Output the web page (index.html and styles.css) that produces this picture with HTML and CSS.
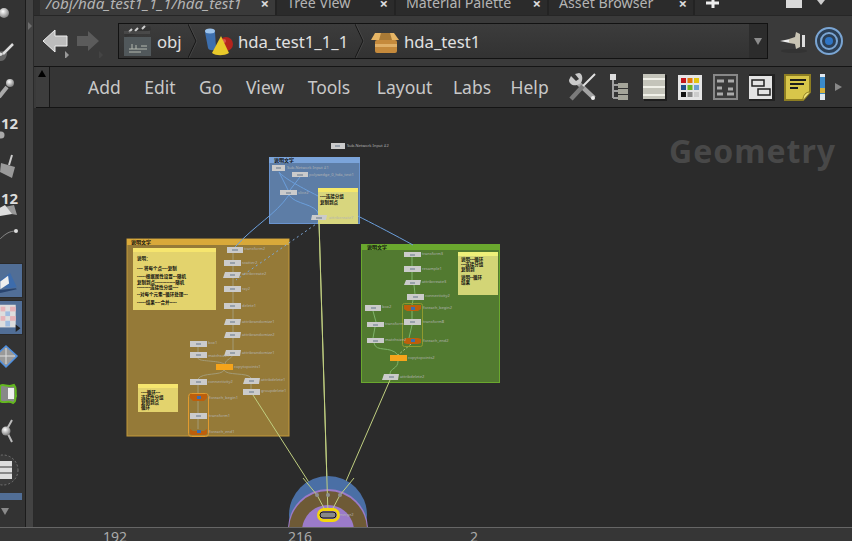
FILE: index.html
```html
<!DOCTYPE html>
<html lang="en">
<head>
<meta charset="utf-8">
<title>Network editor</title>
<link rel="stylesheet" href="styles.css">
</head>
<body>
<div class="app">
  <div class="workspace">
    <aside class="rail">
      <svg class="tool t1" viewBox="0 0 25 32"><defs><radialGradient id="ball" cx=".4" cy=".35" r=".7"><stop offset="0" stop-color="#fff"/><stop offset="1" stop-color="#777"/></radialGradient></defs><circle cx="4" cy="13" r="5" fill="url(#ball)"/></svg>
      <svg class="tool t2" viewBox="0 32 25 36"><path d="M-2 52c3-1 7-1 9 1 0 3-2 8-6 8h-4z" fill="#666"/><path d="M13 44 3 54" stroke="#ddd" stroke-width="2.500" fill="none"/><path d="M-2 53c2-1 4 0 5 1-1 2-3 2-5 2z" fill="#ddd"/></svg>
      <svg class="tool t3" viewBox="0 68 25 36"><path d="M-1 97 7 87" stroke="#aaa" stroke-width="4"/><circle cx="10" cy="83" r="4" fill="url(#ball)"/></svg>
      <svg class="tool t4" viewBox="0 104 25 42"><text class="twelve" x="1" y="129">12</text><circle cx="1" cy="135" r="3.500" fill="#aaa"/></svg>
      <svg class="tool t5" viewBox="0 146 25 36"><path d="M9 165 12 155" stroke="#ccc" stroke-width="2"/><path d="M1 163 15 167 12 178 0 172z" fill="#9a9a9a"/></svg>
      <svg class="tool t6" viewBox="0 182 25 36"><path d="M0 208 14 205 17 215 6 213 0 214z" fill="#999"/><path d="M-2 209 5 205 12 214 0 216z" fill="#ddd"/><text class="twelve" x="1" y="204">12</text></svg>
      <svg class="tool t7" viewBox="0 218 25 45"><path d="M-2 241C5 234 9 231 16 231" stroke="#888" fill="none"/><circle cx="16" cy="231" r="2" fill="#ddd"/></svg>
      <div class="slot">
        <svg class="tool slot-icon" viewBox="0 263 22 34"><path d="M0 280 10 272 17 287 8 288 0 286z" fill="#3d6cac"/><path d="M0 281 8 275 9 283 0 289z" fill="#eee"/><path d="M-2 290 16 288 17 289 0 293z" fill="#29446e"/></svg>
      </div>
      <div class="slot second">
        <svg class="tool slot-icon" viewBox="0 300 22 35"><rect x="-2" y="304" width="18" height="24" fill="#ddd"/><rect x="0" y="306" width="5" height="5" fill="#e6b3b9"/><rect x="10" y="306" width="6" height="5" fill="#e6b3b9"/><rect x="5" y="311" width="5" height="5" fill="#9fbce0"/><rect x="0" y="316" width="5" height="5" fill="#e6b3b9"/><rect x="10" y="316" width="6" height="5" fill="#e6b3b9"/><rect x="5" y="321" width="5" height="6" fill="#9fbce0"/><path d="M16 325l5 4-5 4z" fill="#222"/></svg>
      </div>
      <svg class="tool t10" viewBox="0 339 25 34"><path d="M6 346 17 356 6 367-5 356z" fill="#999" stroke="#4d90e2" stroke-width="1.500"/><path d="M6 348 6 364M-3 356H15" stroke="#ddd"/></svg>
      <svg class="tool t11" viewBox="0 373 25 40"><path d="M0 386C3 383 8 388 14 385 17 388 15 392 16 396 14 400 17 401 13 403 8 400 4 404 0 401Z" fill="#888" stroke="#63b81e" stroke-width="2"/><rect x="8" y="388" width="6" height="11" fill="#eee"/></svg>
      <svg class="tool t12" viewBox="0 413 25 38"><path d="M7 429 12 420M7 432 12 442" stroke="#bbb" stroke-width="2"/><circle cx="6" cy="431" r="4.500" fill="url(#ball)"/></svg>
      <svg class="tool t13" viewBox="0 451 25 38"><circle cx="3" cy="470" r="15" fill="#3a3a3a" stroke="#777" stroke-dasharray="2 2"/><rect x="-4" y="461" width="16" height="18" fill="#ddd"/><path d="M-4 467H12M-4 473H12" stroke="#888" stroke-width="2"/></svg>
      <div class="railbar"></div>
      <div class="rail-arrow"></div>
    </aside>
    <div class="sash"><span class="sash-arrow"></span></div>
    <main class="pane">
      <nav class="tabs">
        <div class="tab active"><span class="italic">/obj/hda_test1_1_1/hda_test1</span><span class="close">×</span></div>
        <div class="tab"><span>Tree View</span><span class="close">×</span></div>
        <div class="tab"><span>Material Palette</span><span class="close">×</span></div>
        <div class="tab"><span>Asset Browser</span><span class="close">×</span></div>
        <div class="tab-add"><svg width="16" height="15" viewBox="0 0 16 15"><path d="M8 0V8M1 3H15" stroke="#eee" stroke-width="3"/></svg></div>
        <div class="tab-right"><span class="desk"></span><span class="desk-arrow"></span></div>
      </nav>
      <div class="pathrow">
        <div class="nav-buttons">
          <svg width="64" height="34" viewBox="0 0 64 34"><path d="M2 17 14 6V12H26V22H14V28Z" fill="#bcbcbc" stroke="#eee"/><path d="M24 27l4 4-4 4z" fill="#999"/><path d="M58 17 47 7V12H36V22H47V27Z" fill="#5b5b5b"/><path d="M58 27l4 4-4 4z" fill="#444"/></svg>
        </div>
        <div class="path">
          <div class="crumb crumb-first">
            <svg width="29" height="32" viewBox="0 0 29 32"><path d="M1 8 27 1 28 5 2 12z" fill="#333"/><path d="M6 7l3-3M12 6l3-3M19 4l3-3" stroke="#ccc" stroke-width="2"/><rect x="1" y="6" width="26" height="3" fill="#555" opacity=".6"/><rect x="1" y="12" width="27" height="19" fill="#51585b"/><path d="M6 24H24M6 27H18M9 19V24M13 20V24M18 21H24" stroke="#b5b9b0"/></svg>
            <span>obj</span>
          </div>
          <svg class="chev" width="9" height="34" viewBox="0 0 9 34"><path d="M0 0 8 17 0 34" fill="none" stroke="#161616"/><path d="M1 0 9 17 1 34" fill="none" stroke="#555" opacity=".5"/></svg>
          <div class="crumb crumb-second">
            <svg width="32" height="30" viewBox="0 0 32 30"><path d="M1 6C1 2 10 2 11 6L12 22C11 25 5 25 4 22Z" fill="#3d6fae"/><ellipse cx="6" cy="5" rx="5" ry="2.500" fill="#9cc3ec"/><circle cx="22" cy="18" r="7" fill="#b4241d"/><circle cx="20" cy="15" r="2" fill="#d9544c"/><path d="M17 10 8 27C12 30 20 30 25 27Z" fill="#e8c92a"/></svg>
            <span>hda_test1_1_1</span>
          </div>
          <svg class="chev" width="9" height="34" viewBox="0 0 9 34"><path d="M0 0 8 17 0 34" fill="none" stroke="#161616"/><path d="M1 0 9 17 1 34" fill="none" stroke="#555" opacity=".5"/></svg>
          <div class="crumb crumb-third">
            <svg width="31" height="30" viewBox="0 0 31 30"><path d="M5 7H24L29 14H1Z" fill="#e6b565"/><path d="M11 7H20L22 14H9Z" fill="#a97a36"/><rect x="5" y="14" width="22" height="13" rx="2" fill="#c58a3c"/><rect x="5" y="18" width="22" height="3" fill="#e0b068"/></svg>
            <span>hda_test1</span>
          </div>
          <div class="path-drop"></div>
        </div>
        <div class="path-tools">
          <svg width="28" height="28" viewBox="0 0 28 28"><ellipse cx="14" cy="24" rx="13" ry="2" fill="#333"/><path d="M0 14 10 12V16Z" fill="#eee"/><path d="M9 12 15 10 16 5 20 7V20L16 22 15 17 9 16Z" fill="#c9c4b4"/><rect x="22" y="8" width="3" height="12" fill="#ddd"/></svg>
          <svg width="30" height="30" viewBox="0 0 30 30"><circle cx="15" cy="15" r="13" fill="#2c3f55" stroke="#7aa5d3" stroke-width="2"/><circle cx="15" cy="15" r="8" fill="none" stroke="#7aa5d3" stroke-width="2"/><circle cx="15" cy="15" r="4" fill="#2f75c5"/></svg>
        </div>
      </div>
      <div class="menubar">
        <div class="scroller"><span class="up"></span></div>
        <div class="back"></div>
        <span class="menu">Add</span><span class="menu">Edit</span><span class="menu">Go</span><span class="menu">View</span><span class="menu">Tools</span><span class="menu m-layout">Layout</span><span class="menu m-labs">Labs</span><span class="menu">Help</span>
        <div class="tool-icons">
          <svg width="30" height="30" viewBox="0 0 30 30"><path d="M9 10 26 26" stroke="#a4a4a4" stroke-width="4.500"/><path d="M1 8 3 4 8 9 11 7 7 2 11 1C15 2 15 8 13 11L9 13C5 14 1 12 1 8Z" fill="#c9c9c9"/><circle cx="25" cy="26" r="2" fill="#eee"/><path d="M27 2 14 15" stroke="#e2e2e2" stroke-width="2"/><path d="M15 14 3 27" stroke="#7b7b7b" stroke-width="4.500"/></svg>
          <svg class="i-tree" width="18" height="26" viewBox="0 0 18 26"><rect x="0" y="0" width="6" height="6" fill="#ddd"/><path d="M3 6V24M3 11H8M3 17H8M3 24H8" stroke="#a0a0a0" stroke-width="2"/><path d="M8 9H13V14H8ZM13 9H18V14H13ZM8 15H13V20H8ZM13 15H18V20H13ZM8 21H13V26H8ZM13 21H18V26H13Z" fill="#a5a59a"/></svg>
          <svg class="i-lines" width="24" height="27" viewBox="0 0 24 27"><rect x="1" y="1" width="23" height="26" fill="#1e1e1e"/><rect width="22" height="25" fill="#c4c4ba"/><path d="M0 5H22M0 13H22M0 21H22" stroke="#f0f0e8" stroke-width="2"/></svg>
          <svg width="24" height="25" viewBox="0 0 24 25"><rect width="24" height="25" fill="#e5e5e5"/><rect x="3" y="3" width="5" height="5" fill="#c4161c"/><rect x="9.500" y="3" width="5" height="5" fill="#e57a09"/><rect x="16" y="3" width="5" height="5" fill="#e3c40e"/><rect x="3" y="10" width="5" height="5" fill="#214f8a"/><rect x="9.500" y="10" width="5" height="5" fill="#6cb51f"/><rect x="16" y="10" width="5" height="5" fill="#6f9fd0"/><rect x="3" y="17" width="5" height="5" fill="#111"/><rect x="9.500" y="17" width="5" height="5" fill="#888"/><rect x="16" y="17" width="5" height="5" fill="#ccc"/></svg>
          <svg width="25" height="26" viewBox="0 0 25 26"><rect x="1" y="1" width="23" height="24" fill="#3a3a3a" stroke="#888" stroke-width="2"/><path d="M4 7H11M15 7H21M9 14H4M15 15H20M4 20H10M14 20H21" stroke="#aaa" stroke-width="3"/></svg>
          <svg width="26" height="27" viewBox="0 0 26 27"><rect width="26" height="27" fill="#222"/><rect x="0" y="2" width="23" height="23" fill="#e3e3e3"/><rect x="3" y="6" width="12" height="6" fill="#e3e3e3" stroke="#222" stroke-width="1.500"/><rect x="9" y="15" width="12" height="6" fill="#e3e3e3" stroke="#222" stroke-width="1.500"/></svg>
          <svg class="i-note" width="27" height="28" viewBox="0 0 27 28"><path d="M1 2H26V19L19 27H1Z" fill="#d8c64a" stroke="#8e7e22" stroke-width="2"/><path d="M6 7H22M6 11H20M6 15H14" stroke="#1c1c1c" stroke-width="2"/><path d="M26 19C22 19 19 22 19 27" fill="#efe27a" stroke="#8e7e22"/></svg>
          <svg class="i-cut" width="5" height="26" viewBox="0 0 5 26"><rect width="5" height="26" fill="#dfe7ef"/><rect y="3" width="5" height="17" fill="#3b8ac8"/><rect y="14" width="5" height="5" fill="#d5b13c"/></svg>
          <span class="more"></span>
        </div>
      </div>
      <div class="canvas">
        <svg class="graph" viewBox="34 108 818 419" width="818" height="419">
          <text class="wm" x="669" y="163">Geometry</text>

          <rect x="127" y="239" width="162" height="197" fill="#957a38" stroke="#c49a3a"/>
          <rect x="127" y="239" width="162" height="6" fill="#d9a93a"/>
          <text class="boxtitle" x="131" y="244">说明文字</text>

          <rect x="361.500" y="244.500" width="138" height="138" fill="#527a30" stroke="#6aa82e"/>
          <rect x="361" y="244" width="139" height="6" fill="#6aa82e"/>
          <text class="boxtitle" x="367" y="249">说明文字</text>

          <rect x="269.500" y="157.500" width="90" height="66" fill="#5d7da6" stroke="#6a94cf"/>
          <rect x="269" y="157" width="91" height="6" fill="#7ba4da"/>
          <text class="boxtitle" x="274" y="162">说明文字</text>

          <g fill="none" stroke-width="1">
            <path d="M279 172C290 185 340 205 413 245" stroke="#6b9fdc"/>
            <path d="M289 195C275 215 255 225 235 247" stroke="#6b9fdc"/>
            <path d="M289 195C295 205 316 203 319 215" stroke="#6b9fdc"/>
            <path d="M279 172 288 190M300 177 290 190" stroke="#6b9fdc"/>
            <path d="M319 222 236 280" stroke="#7ea8d8" stroke-dasharray="2 3"/>
            <path d="M319 222 328 515" stroke="#c0cf80"/>
            <path d="M253 395 317 495 326 512" stroke="#c0cf80"/>
            <path d="M390 380 340 495 331 512" stroke="#c0cf80"/>
            <path d="M233 252V352C233 360 226 358 225 364" stroke="#a39b77"/>
            <path d="M198 347V352M198 358C198 362 218 360 224 364" stroke="#a39b77"/>
            <path d="M224 370C222 376 202 372 198 379M224 370C226 376 248 372 251 378M198 385V394M198 400V413M198 419 198 429" stroke="#a39b77"/>
            <path d="M251 384V389" stroke="#a39b77"/>
            <path d="M412 257V280M414 285 415 294M413 300 412 305M412 311V319M412 325 409 338" stroke="#7fb46a"/>
            <path d="M373 311 376 322M375 327 373 338M374 343C376 353 390 345 398 355M398 361C398 369 390 368 390 374" stroke="#7fb46a"/>
            <path d="M411 344 398 355" stroke="#a7c88a" stroke-dasharray="2 2"/>
          </g>

          <rect x="133" y="248" width="83" height="62" fill="#e3d36d"/><rect x="133" y="248" width="83" height="4" fill="#f6e56e"/>
          <text class="note" x="137" y="260">说明：</text>
          <text class="note" x="137" y="270">---- 将每个点----复制</text>
          <text class="note" x="137" y="278">------根据属性设置---随机</text>
          <text class="note" x="137" y="284">复制到点--------------随机</text>
          <text class="note" x="137" y="289">---------连接性分组----</text>
          <text class="note" x="137" y="296">--对每个元素--循环处理---</text>
          <text class="note" x="137" y="304">------结果----合并-----</text>

          <rect x="138" y="384" width="40" height="28" fill="#e3d36d"/><rect x="138" y="384" width="40" height="4" fill="#f6e56e"/>
          <text class="note" x="141" y="394">----循环---</text>
          <text class="note" x="141" y="399">连接性分组</text>
          <text class="note" x="141" y="404">复制到点</text>
          <text class="note" x="141" y="409">循环</text>

          <rect x="458" y="252" width="40" height="43" fill="#d3d576"/><rect x="458" y="252" width="40" height="4" fill="#eef07a"/>
          <text class="note" x="461" y="261">说明---循环</text>
          <text class="note" x="461" y="266">---连接分组</text>
          <text class="note" x="461" y="271">复制到</text>
          <text class="note" x="461" y="279">说明--循环</text>
          <text class="note" x="461" y="284">结果</text>

          <rect x="318" y="188" width="40" height="36" fill="#d8d67e"/><rect x="318" y="188" width="40" height="4" fill="#f5e86a"/>
          <text class="note" x="320" y="198">----连接分组</text>
          <text class="note" x="320" y="204">复制到点</text>

          <rect x="188.500" y="393.500" width="20" height="43" rx="3" fill="none" stroke="#e29a2e"/>
          <rect x="402.500" y="303.500" width="20" height="43" rx="2" fill="none" stroke="#8f9a2e"/>

          <g class="nodes">
            <rect x="331" y="143" width="14" height="6"/>
            <rect x="272" y="165" width="13" height="6"/>
            <rect x="292" y="172" width="16" height="5"/>
            <rect x="280" y="190" width="17" height="5"/>
            <path d="M312 215H327L326 220H311Z"/>
            <rect x="227" y="247" width="16" height="6"/>
            <rect x="224" y="260" width="17" height="6"/>
            <path d="M225 272H241L239 278H223Z"/>
            <rect x="224" y="286" width="17" height="6"/>
            <rect x="224" y="303" width="17" height="6"/>
            <path d="M226 319H241L240 325H224Z"/>
            <path d="M226 332H241L240 338H224Z"/>
            <path d="M226 350H241L240 356H224Z"/>
            <rect x="190" y="341" width="17" height="6"/>
            <rect x="190" y="352" width="17" height="6"/>
            <rect x="190" y="379" width="17" height="6"/>
            <path d="M245 378H260L259 384H243Z"/>
            <rect x="243" y="389" width="17" height="6"/>
            <rect x="190" y="413" width="17" height="6"/>
            <rect x="404" y="252" width="17" height="5"/>
            <rect x="404" y="266" width="17" height="6"/>
            <path d="M406 280H421L420 285H404Z"/>
            <rect x="407" y="294" width="17" height="6"/>
            <rect x="404" y="319" width="17" height="6"/>
            <rect x="365" y="305" width="16" height="6"/>
            <rect x="367" y="322" width="17" height="5"/>
            <rect x="367" y="338" width="17" height="5"/>
            <path d="M384 374H399L398 380H382Z"/>
            <rect x="320" y="526" width="17" height="1"/>
          </g>
          <g class="node-marks">
            <rect x="335" y="145" width="5" height="2"/><rect x="276" y="167" width="5" height="2"/><rect x="297" y="174" width="6" height="2"/><rect x="286" y="192" width="5" height="2"/><rect x="316" y="217" width="6" height="2"/>
            <rect x="232" y="249" width="6" height="2"/><rect x="230" y="262" width="5" height="2"/><rect x="230" y="274" width="5" height="2"/><rect x="230" y="288" width="5" height="2"/><rect x="230" y="305" width="5" height="2"/><rect x="230" y="321" width="5" height="2"/><rect x="230" y="334" width="5" height="2"/><rect x="230" y="352" width="5" height="2"/>
            <rect x="196" y="343" width="5" height="2"/><rect x="196" y="354" width="5" height="2"/><rect x="196" y="381" width="5" height="2"/><rect x="249" y="380" width="5" height="2"/><rect x="249" y="391" width="5" height="2"/><rect x="196" y="415" width="5" height="2"/>
            <rect x="410" y="254" width="5" height="2"/><rect x="410" y="268" width="5" height="2"/><rect x="410" y="282" width="5" height="2"/><rect x="413" y="296" width="5" height="2"/><rect x="410" y="321" width="5" height="2"/><rect x="371" y="307" width="5" height="2"/><rect x="373" y="324" width="5" height="2"/><rect x="373" y="340" width="5" height="2"/><rect x="389" y="376" width="5" height="2"/>
          </g>
          <g class="orange">
            <rect x="216" y="364" width="17" height="6"/>
            <rect x="390" y="355" width="17" height="6"/>
          </g>
          <g class="foreach">
            <path d="M190 394H207V398L204 401H193L190 398Z"/>
            <path d="M190 429 193 431H204L207 429V434L205 435H192L190 434Z"/>
            <path d="M404 305H421V309L418 311H407L404 309Z"/>
            <path d="M404 339 407 338H418L421 339V343L418 344H407L404 343Z"/>
          </g>
          <g class="foreach-dot">
            <rect x="197" y="396" width="4" height="3"/><rect x="197" y="430" width="4" height="3"/>
            <rect x="411" y="307" width="4" height="3"/><rect x="411" y="339" width="4" height="3"/>
          </g>

          <g class="label">
            <text x="347" y="147">Sub-Network Input #2</text>
            <text x="287" y="169">Sub-Network Input #1</text>
            <text x="309" y="176">polywedge_0_hda_test1</text>
            <text x="298" y="194">slice2</text>
            <text x="329" y="219">attribcreate7</text>
            <text x="244" y="250">transform2</text>
            <text x="242" y="264">scatter2</text>
            <text x="242" y="275">attribcreate2</text>
            <text x="242" y="290">ray2</text>
            <text x="242" y="307">delete1</text>
            <text x="242" y="323">attribrandomize1</text>
            <text x="242" y="336">attribrandomize2</text>
            <text x="242" y="354">attribrandomize1</text>
            <text x="208" y="344">box1</text>
            <text x="208" y="357">matchsize1</text>
            <text x="234" y="368">copytopoints1</text>
            <text x="208" y="383">connectivity2</text>
            <text x="261" y="381">attribdelete1</text>
            <text x="261" y="392">groupdelete1</text>
            <text x="209" y="399">foreach_begin1</text>
            <text x="209" y="417">transform1</text>
            <text x="209" y="433">foreach_end1</text>
            <text x="422" y="255">transform3</text>
            <text x="422" y="270">resample1</text>
            <text x="422" y="283">attribcreate3</text>
            <text x="425" y="297">connectivity2</text>
            <text x="423" y="309">foreach_begin2</text>
            <text x="423" y="323">transform8</text>
            <text x="423" y="342">foreach_end2</text>
            <text x="382" y="308">box2</text>
            <text x="385" y="325">transform</text>
            <text x="385" y="341">matchsize2</text>
            <text x="408" y="359">copytopoints2</text>
            <text x="400" y="378">attribdelete2</text>
          </g>

          <circle cx="328" cy="515" r="39" fill="#4a6fa5"/>
          <circle cx="328" cy="529" r="40" fill="#9b7bc9"/>
          <circle cx="328" cy="530" r="39" fill="#6e5a36"/>
          <rect x="282" y="527" width="92" height="2" fill="#2b2b2b"/>
          <circle cx="328" cy="531" r="26" fill="#9b7bc9"/>
          <path d="M319 222 328 515M303 478 317 495 326 512M354 478 340 495 331 512" fill="none" stroke="#c0cf80"/>
          <g fill="#8f8f8f"><circle cx="317" cy="495" r="2"/><circle cx="328" cy="495" r="2"/><circle cx="340" cy="495" r="2"/></g>
          <rect x="318.500" y="509.500" width="20" height="11" rx="5.500" fill="#9b7bc9" stroke="#f3d60c" stroke-width="3"/>
          <rect x="320" y="512" width="16" height="6" rx="3" fill="#888" stroke="#111"/>
          <text class="label-free" x="339" y="516">merge2</text>
        </svg>
      </div>
    </main>
  </div>
  <footer class="ruler"><span class="n1">192</span><span class="n2">216</span><span class="n3">2</span></footer>
</div>
</body>
</html>
```
FILE: styles.css
```css
* { box-sizing: border-box; }
html, body { margin: 0; padding: 0; }
body { width: 852px; height: 541px; overflow: hidden; background: #3a3a3a; font-family: "Noto Sans", sans-serif; color: #d2d2d2; }
svg { display: block; flex: none; }
.app { display: flex; flex-direction: column; width: 852px; height: 541px; }
.workspace { display: flex; height: 527px; }

.rail { width: 26px; flex: none; display: flex; flex-direction: column; background: #333; border-right: 1px solid #1c1c1c; overflow: hidden; }
.tool { width: 25px; }
.t1 { height: 32px; } .t2 { height: 36px; } .t3 { height: 36px; } .t4 { height: 42px; }
.t5 { height: 36px; } .t6 { height: 36px; } .t7 { height: 45px; }
.slot { height: 35px; width: 23px; flex: none; background: #516e96; border: 1px solid #2a2a2a; border-left: 0; }
.slot-icon { width: 22px; height: 33px; }
.second { margin-top: 2px; }
.t10 { height: 34px; margin-top: 4px; } .t11 { height: 40px; } .t12 { height: 38px; } .t13 { height: 38px; margin-bottom: 4px; }
.railbar { height: 7px; width: 22px; background: #516e96; flex: none; }
.rail-arrow { width: 0; height: 0; margin: 8px 0 0 1px; border-left: 4px solid transparent; border-right: 4px solid transparent; border-top: 7px solid #8a8a8a; }
.twelve { font: 700 15px "Noto Sans", sans-serif; fill: #dcdcdc; }

.sash { width: 8px; flex: none; background: #434343; border-right: 1px solid #2a2a2a; padding: 22px 0 0 2px; }
.sash-arrow { display: block; width: 0; height: 0; border-top: 4px solid transparent; border-bottom: 4px solid transparent; border-left: 4px solid #6e6e6e; }

.pane { flex: 1; min-width: 0; display: flex; flex-direction: column; }
.tabs { height: 16px; flex: none; display: flex; align-items: flex-start; background: #2e2e2e; padding-left: 6px; overflow: hidden; border-bottom: 1px solid #262626; }
.tab { height: 15px; display: flex; align-items: flex-end; justify-content: space-between; background: #2b2b2b; border-right: 2px solid #232323; padding: 0 6px 5px 10px; font-size: 14.200px; line-height: 14px; color: #b4b4b4; white-space: nowrap; }
.tab.active { width: 237px; background: #3a3a3a; padding-left: 6px; }
.tab:nth-child(2) { width: 119px; }
.tab:nth-child(3) { width: 153px; }
.tab:nth-child(4) { width: 146px; }
.italic { font-style: italic; font-size: 15.200px; }
.close { font-weight: 700; font-size: 15px; color: #ddd; }
.tab-add { width: 24px; height: 15px; padding: 0 0 0 10px; overflow: hidden; }
.tab-right { margin-left: 67px; display: flex; gap: 15px; height: 15px; }
.desk { width: 16px; height: 8px; background: #d9d9d9; }
.desk-arrow { width: 0; height: 0; border-left: 4px solid transparent; border-right: 4px solid transparent; border-top: 5px solid #ccc; }

.pathrow { height: 51px; flex: none; display: flex; align-items: center; background: #3a3a3a; padding-left: 7px; border-bottom: 1px solid #151515; }
.nav-buttons { width: 77px; flex: none; }
.path { width: 650px; height: 36px; flex: none; display: flex; align-items: center; background: linear-gradient(#3c3c3c, #323232); border: 1px solid #121212; font-size: 16.700px; color: #e0e0e0; position: relative; }
.crumb { display: flex; align-items: center; height: 100%; }
.crumb-first { width: 69px; padding-left: 4px; gap: 5px; }
.crumb-second { width: 158px; padding-left: 7px; gap: 2px; }
.crumb-third { padding-left: 6px; gap: 3px; }
.path-drop { position: absolute; right: 0; top: 0; bottom: 0; width: 18px; background: #2c2c2c; }
.path-drop::after { content: ""; position: absolute; left: 5px; top: 14px; border-left: 4px solid transparent; border-right: 4px solid transparent; border-top: 7px solid #8c8c8c; }
.path-tools { flex: 1; display: flex; align-items: center; gap: 6px; padding-left: 12px; }

.menubar { height: 41px; flex: none; display: flex; align-items: center; background: #353535; margin-left: 2px; border-bottom: 1px solid #141414; }
.scroller { width: 14px; height: 100%; flex: none; background: #3d3d3d; border-right: 1px solid #171717; position: relative; }
.up { position: absolute; left: 2px; top: 3px; border-left: 4px solid transparent; border-right: 4px solid transparent; border-bottom: 7px solid #000; }
.back { width: 38px; flex: none; }
.menu { font-size: 17.500px; color: #c8c8c8; margin-right: 23.500px; white-space: nowrap; }
.m-layout { margin-left: 3px; margin-right: 20.500px; }
.m-labs { margin-right: 19.500px; }
.tool-icons { display: flex; align-items: center; gap: 11px; margin-left: -4.500px; }
.i-tree { margin-left: 1px; }
.i-lines { margin-left: 4px; }
.i-note { margin-left: -2px; }
.i-cut { margin-left: -2px; }
.more { margin-left: -1px; border-top: 4px solid transparent; border-bottom: 4px solid transparent; border-left: 7px solid #888; }

.canvas { flex: 1; min-height: 0; background: #2b2b2b; overflow: hidden; }
.graph text { font-family: "Noto Sans", "Noto Sans CJK SC", sans-serif; }
.graph .wm { font-family: "Noto Sans", sans-serif; font-weight: 700; font-size: 32px; letter-spacing: 1px; fill: #484848; }
.boxtitle { font-size: 5px; font-weight: 700; fill: #111; }
.note { font-size: 4.500px; font-weight: 700; fill: #111; }
.nodes { fill: #cbcbcb; }
.node-marks { fill: #97a0aa; }
.orange { fill: #f5a41b; }
.foreach { fill: #bd5f0c; }
.foreach-dot { fill: #3b6fb0; }
.label text, .label-free { font-size: 4px; fill: #b4b4b4; }

.ruler { height: 14px; flex: none; background: #363636; border-top: 1px solid #666; font-size: 14px; line-height: 18px; color: #aaa; overflow: hidden; display: flex; padding-left: 103px; }
.n1 { width: 185px; }
.n2 { width: 182px; }
```
